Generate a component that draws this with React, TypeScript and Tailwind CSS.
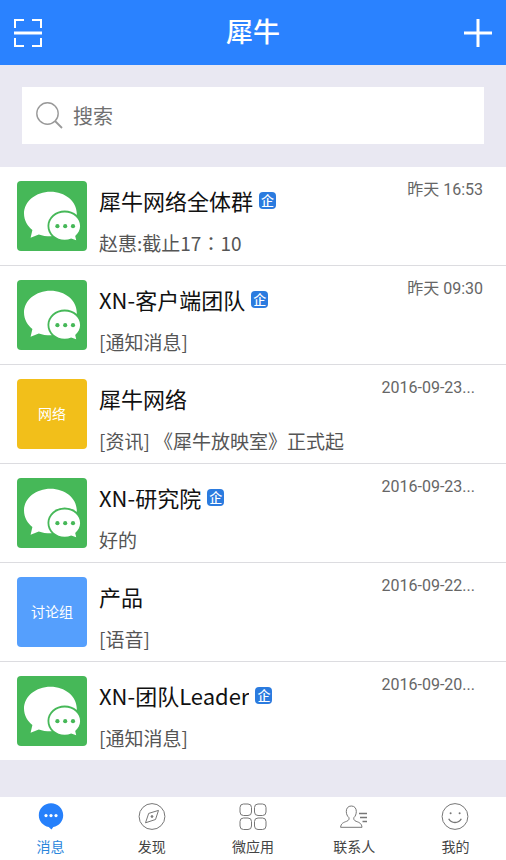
import { useState } from "react";
import type { ReactNode } from "react";

type Chat = {
  id: number;
  name: string;
  preview: ReactNode;
  time: string;
  avatar: "wechat" | "network" | "group";
  company?: boolean;
};

const chats: Chat[] = [
  {
    id: 1,
    name: "犀牛网络全体群",
    // the TC font centres the full-width colon
    preview: (
      <>
        赵惠:截止17<span className="font-['Noto_Sans_CJK_TC',sans-serif]" lang="zh-TW">：</span>10
      </>
    ),
    time: "昨天 16:53",
    avatar: "wechat",
    company: true,
  },
  { id: 2, name: "XN-客户端团队", preview: "[通知消息]", time: "昨天 09:30", avatar: "wechat", company: true },
  { id: 3, name: "犀牛网络", preview: "[资讯] 《犀牛放映室》正式起", time: "2016-09-23...", avatar: "network" },
  { id: 4, name: "XN-研究院", preview: "好的", time: "2016-09-23...", avatar: "wechat", company: true },
  { id: 5, name: "产品", preview: "[语音]", time: "2016-09-22...", avatar: "group" },
  { id: 6, name: "XN-团队Leader", preview: "[通知消息]", time: "2016-09-20...", avatar: "wechat", company: true },
];

function Avatar({ kind }: { kind: Chat["avatar"] }) {
  if (kind === "network") {
    return (
      <div className="flex size-[70px] shrink-0 items-center justify-center rounded bg-[#f2bf1a] text-sm text-white">
        网络
      </div>
    );
  }
  if (kind === "group") {
    return (
      <div className="flex size-[70px] shrink-0 items-center justify-center rounded bg-[#559ffd] text-sm text-white">
        讨论组
      </div>
    );
  }
  return (
    <svg viewBox="0 0 70 70" className="size-[70px] shrink-0 rounded bg-[#46b858]" aria-hidden="true">
      <path
        fill="#fff"
        d="M33.5 10.7C19 10.7 7 20.2 7 32.6c0 7 3.6 12.6 8.4 16.4l-1.8 7.8 8.2-3.4c3.6 1.3 7.6 1.8 11.7 1.8C48 55.2 59.8 45 59.8 32.6S48 10.7 33.5 10.7z"
      />
      <ellipse cx="47.7" cy="45" rx="17.2" ry="15.6" fill="#46b858" />
      <path
        fill="#fff"
        d="M47.7 31.4c-8.6 0-15.4 6-15.4 13.6s6.8 13.7 15.4 13.7c2.2 0 4.500-.4 6.500-1.200l5 1.800-1-4.400c3-2.500 4.900-6 4.900-9.900 0-7.600-6.800-13.600-15.400-13.600z"
      />
      <g fill="#46b858">
        <circle cx="40.4" cy="45.2" r="2.1" />
        <circle cx="48.2" cy="45.2" r="2.1" />
        <circle cx="56" cy="45.2" r="2.1" />
      </g>
    </svg>
  );
}

function ChatRow({ chat }: { chat: Chat }) {
  const longTime = chat.time.endsWith("...");
  return (
    <li className="border-b border-[#dcdce0] last:border-b-0">
      <a href="#" className="flex h-[98px] items-start gap-3 pt-3.5 pr-[23px] pl-[17px]">
        <Avatar kind={chat.avatar} />
        <div className="min-w-0 flex-1 pt-0.5 font-['Noto_Sans_CJK_SC',sans-serif]">
          <div className="flex items-center gap-1.5">
            <span className="truncate text-[22px] leading-[34px] text-[#111]">{chat.name}</span>
            {chat.company && (
              <span className="flex size-[17px] shrink-0 items-center justify-center rounded-sm bg-[#2b7bdf] text-[13px] leading-4 font-medium text-white">
                企
              </span>
            )}
          </div>
          <p className="mt-[9px] text-[19px] leading-[34px] whitespace-nowrap text-[#555]">{chat.preview}</p>
        </div>
        <time className={`-mt-1 shrink-0 text-base leading-[26px] text-[#666] ${longTime ? "pr-2" : ""}`}>
          {chat.time}
        </time>
      </a>
    </li>
  );
}

const tabs: { id: string; label: string; icon: ReactNode }[] = [
  {
    id: "messages",
    label: "消息",
    icon: (
      <>
        <path
          fill="#2680fb"
          stroke="none"
          d="M14 1.300C7.200 1.300 1.800 6.600 1.800 13.200c0 5.800 4.200 10.700 9.900 11.800l2.800 2.500 1.800-2.500c5.700-1 9.900-6 9.900-11.800C26.200 6.600 20.800 1.300 14 1.300z"
        />
        <g fill="#fff" stroke="none">
          <circle cx="9" cy="13.6" r="1.6" />
          <circle cx="14" cy="13.6" r="1.6" />
          <circle cx="19" cy="13.6" r="1.6" />
        </g>
      </>
    ),
  },
  {
    id: "discover",
    label: "发现",
    icon: (
      <>
        <circle cx="14" cy="14.5" r="12.9" />
        <path d="M20.5 8.4l-3 9.1-10 3.3 3.2-9.4z" />
        <circle cx="14" cy="14.5" r=".9" fill="currentColor" />
      </>
    ),
  },
  {
    id: "apps",
    label: "微应用",
    icon: (
      <>
        <rect x="1" y="2" width="11.5" height="11.5" rx="3.5" />
        <rect x="15.5" y="2" width="11.5" height="11.5" rx="3.5" />
        <rect x="1" y="16" width="11.5" height="11.5" rx="3.5" />
        <rect x="15.5" y="16" width="11.5" height="11.5" rx="3.5" />
      </>
    ),
  },
  {
    id: "contacts",
    label: "联系人",
    icon: (
      <>
        <path d="M11.3 4C8 4 6.3 6.3 6.3 9.4c0 2.6 1 4.9 2.6 6.2.5 1.8-.2 2.9-2.3 3.700C3.500 20.500 1 21.300.6 25.300H22c-.4-4-2.700-4.800-5.900-6-2-.8-2.700-1.900-2.200-3.700 1.500-1.300 2.400-3.600 2.400-6.200C16.300 6.300 14.600 4 11.300 4z" />
        <path d="M19 11.5h8M20 15.5h7M22.5 19.5h4.5" strokeWidth="1.5" />
      </>
    ),
  },
  {
    id: "mine",
    label: "我的",
    icon: (
      <>
        <circle cx="14" cy="14.5" r="12.9" />
        <circle cx="9.6" cy="11.3" r="1" fill="currentColor" stroke="none" />
        <circle cx="18.6" cy="11.3" r="1" fill="currentColor" stroke="none" />
        <path d="M7.7 16.7c2.6 5 10 5 12.6 0" strokeWidth="1.4" />
      </>
    ),
  },
];

export default function App() {
  const [active, setActive] = useState("messages");

  return (
    <div className="flex min-h-screen flex-col bg-[#e9e8f2] font-[Roboto,'Noto_Sans_CJK_SC',sans-serif]">
      {/* HEADER */}
      <header className="flex h-[65px] items-center justify-between bg-[#2a82ff] px-3.5 text-white">
        <button type="button" aria-label="扫一扫">
          <svg viewBox="0 0 28 28" className="size-7" fill="none" stroke="currentColor" strokeWidth="2">
            <path d="M1 9V1h9M18 1h9v8M1 19v8h9M18 27h9v-8" />
            <path d="M0 14h28" strokeWidth="3" />
          </svg>
        </button>
        <h1 className="text-[27px] leading-10 font-medium">犀牛</h1>
        <button type="button" aria-label="添加">
          <svg viewBox="0 0 28 28" className="size-7" fill="none" stroke="currentColor" strokeWidth="3">
            <path d="M14 0v28M0 14h28" />
          </svg>
        </button>
      </header>

      <main className="flex-1">
        {/* SEARCH */}
        <div className="px-[22px] pt-[22px] pb-[23px]">
          <label className="flex h-[57px] items-center gap-2.5 bg-white px-3.5">
            <svg viewBox="0 0 27 27" className="size-[27px] shrink-0" fill="none" stroke="#999" strokeWidth="1.4">
              <circle cx="11.5" cy="11.5" r="10.7" />
              <path d="M19 19l7 7" strokeWidth="1.8" />
            </svg>
            <input
              type="text"
              aria-label="搜索"
              placeholder="搜索"
              className="min-w-0 flex-1 pt-0.5 text-[20px] leading-8 text-[#666] outline-none placeholder:text-[#707070]"
            />
          </label>
        </div>

        {/* CHAT LIST */}
        <ul className="bg-white">
          {chats.map((chat) => (
            <ChatRow key={chat.id} chat={chat} />
          ))}
        </ul>
      </main>

      {/* TABS */}
      <nav className="flex h-[63px] bg-white pb-px">
        {tabs.map(({ id, label, icon }) => (
          <button
            key={id}
            type="button"
            onClick={() => setActive(id)}
            className="flex flex-1 flex-col items-center justify-end gap-1"
          >
            <svg viewBox="0 0 28 29" className="h-[29px] w-7 text-[#777]" fill="none" stroke="currentColor">
              {icon}
            </svg>
            <span className={`text-sm leading-6 ${active === id ? "text-[#2a86dc]" : "text-[#444]"}`}>{label}</span>
          </button>
        ))}
      </nav>
    </div>
  );
}
